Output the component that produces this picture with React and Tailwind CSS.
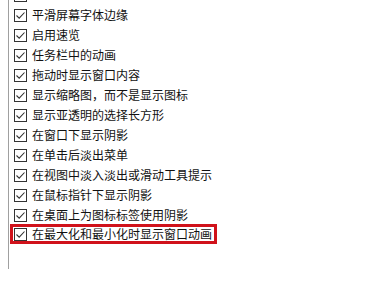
import React from 'react';

const items = [
  '平滑屏幕字体边缘',
  '启用速览',
  '任务栏中的动画',
  '拖动时显示窗口内容',
  '显示缩略图，而不是显示图标',
  '显示亚透明的选择长方形',
  '在窗口下显示阴影',
  '在单击后淡出菜单',
  '在视图中淡入淡出或滑动工具提示',
  '在鼠标指针下显示阴影',
  '在桌面上为图标标签使用阴影',
];

// small win10-style checkbox
function Check() {
  return (
    <span className="w-[13px] h-[13px] border border-[#333333] bg-white flex items-center justify-center shrink-0">
      <svg width="11" height="11" viewBox="0 0 11 11">
        <path d="M1.5 5.5 L4.2 8.2 L9.5 2.5" fill="none" stroke="#333333" strokeWidth="1.1" />
      </svg>
    </span>
  );
}

function App() {
  return (
    <div
      className="w-[376px] h-[284px] overflow-hidden bg-white text-[12px] text-[#111111]"
      style={{ fontFamily: '"Noto Sans CJK SC", "Microsoft YaHei", sans-serif' }}
    >
      <div className="ml-[8px] h-full border-l border-[#a0a0a0]">
        <div className="-mt-[15px] flex flex-col">
          {/* row cut off at the top */}
          <div className="h-[20px] flex items-center gap-[5px] pl-[5px]">
            <Check />
          </div>
          {items.map((t) => (
            <div key={t} className="h-[20px] flex items-center gap-[5px] pl-[5px] leading-none whitespace-nowrap">
              <Check />
              <span>{t}</span>
            </div>
          ))}
          <div className="-mt-px ml-[1px] w-[207px] h-[20px] flex items-center gap-[5px] pl-[4px] leading-none whitespace-nowrap ring-[3px] ring-inset ring-[#d0121b]">
            <Check />
            <span>在最大化和最小化时显示窗口动画</span>
          </div>
        </div>
      </div>
    </div>
  );
}

export default App;
